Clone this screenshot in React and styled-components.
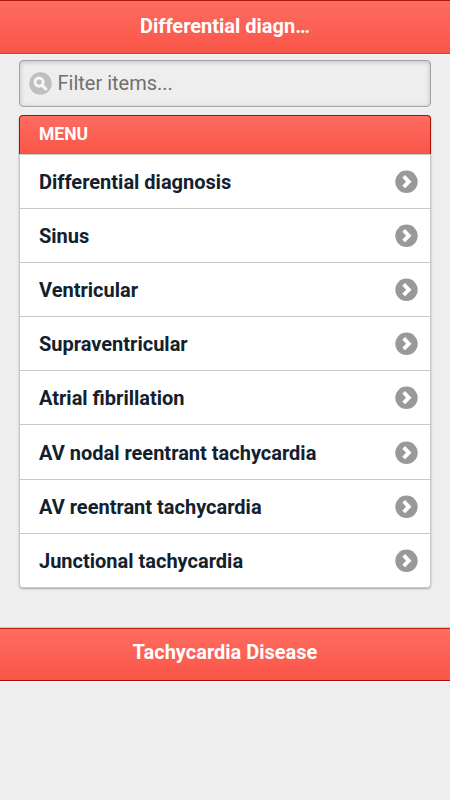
import React from "react";
import styled, { createGlobalStyle } from "styled-components";

const GlobalStyle = createGlobalStyle`
  * { box-sizing: border-box; }
  body { margin: 0; background: #eeeeee; font-family: Roboto, "Liberation Sans", sans-serif; }
  h1, h2, h3, ul { margin: 0; padding: 0; }
`;

const Page = styled.div`
  min-height: 800px;
  background: #eeeeee;
`;

const Bar = styled.header`
  height: ${(p) => p.$height}px;
  border-top: 1px solid ${(p) => p.$top};
  border-bottom: 1px solid ${(p) => p.$bottom};
  background: linear-gradient(#ff6c60, #f95548);
  box-shadow: 0 1px 1px rgba(255, 255, 255, 0.7), 0 -1px 0 rgba(120, 120, 120, 0.3);
  text-align: center;
`;

const BarTitle = styled.h1`
  color: #fff;
  font-size: 20px;
  line-height: 24px;
  padding-top: ${(p) => p.$pad}px;
  font-weight: 700;
`;

const Content = styled.main`
  padding: 6.5px 19px 39.6px;
`;

const SearchBox = styled.label`
  display: flex;
  align-items: center;
  gap: 6px;
  height: 47px;
  padding: 0 9px 0 8.5px;
  border: 1px solid #a3a3a3;
  border-radius: 4px;
  background: #eeeeee;
  box-shadow: inset 0 1px 5px rgba(0, 0, 0, 0.2), 0 1px 0 rgba(255, 255, 255, 0.4);
`;

const SearchInput = styled.input`
  flex: 1;
  min-width: 0;
  border: 0;
  padding: 0 0 1px;
  outline: 0;
  background: transparent;
  font: 400 20px/24px Roboto, sans-serif;
  color: #666;
  &::placeholder { color: #707070; opacity: 1; }
`;

const List = styled.ul`
  list-style: none;
  margin-top: 8px;
  border-radius: 4px;
  box-shadow: 0 1px 2px rgba(0, 0, 0, 0.3);
`;

const Divider = styled.li`
  height: 38.5px;
  padding: 7px 19px 0;
  border: 1px solid #a4120b;
  border-bottom: 0;
  border-radius: 4px 4px 0 0;
  background: linear-gradient(#ff6c60, #f95548);
  color: #fff;
  font-size: 17.5px;
  line-height: 22px;
  font-weight: 700;
`;

const Row = styled.li`
  display: flex;
  align-items: center;
  justify-content: space-between;
  height: 54.2px;
  padding: 0 12.5px 0 19px;
  border: 1px solid #c8c8c8;
  border-bottom-width: 0;
  background: #fff;
  color: #12212d;
  font-size: 20px;
  line-height: 24px;
  font-weight: 700;
  &:last-child { border-bottom-width: 1px; border-radius: 0 0 4px 4px; height: 55.5px; }
`;

const Label = styled.span`
  padding-top: 1px;
`;

const Icon = styled.svg`
  display: block;
  flex: none;
  width: 23px;
  height: 23px;
`;

const items = [
  "Differential diagnosis",
  "Sinus",
  "Ventricular",
  "Supraventricular",
  "Atrial fibrillation",
  "AV nodal reentrant tachycardia",
  "AV reentrant tachycardia",
  "Junctional tachycardia",
];

const SearchIcon = () => (
  <Icon viewBox="0 0 23 23">
    <circle cx="11.5" cy="11.5" r="11.25" fill="#bfbfbf" />
    <circle cx="10.1" cy="10.1" r="4.1" fill="none" stroke="#f6f6f6" strokeWidth="2.9" />
    <path d="M13.3 13.3L16.8 16.8" stroke="#f6f6f6" strokeWidth="3.3" strokeLinecap="round" />
  </Icon>
);

const ArrowIcon = () => (
  <Icon viewBox="0 0 23 23">
    <circle cx="11.5" cy="11.8" r="11.2" fill="#999" />
    <path d="M8.7 6.4L13.8 11.7L8.7 17" fill="none" stroke="#fff" strokeWidth="3.9" />
  </Icon>
);

export default function App() {
  return (
    <Page>
      <GlobalStyle />
      <Bar $height={53.5} $top="#aa1710" $bottom="#c84438">
        <BarTitle $pad={13}>Differential diagn…</BarTitle>
      </Bar>
      <Content>
        <SearchBox>
          <SearchIcon />
          <SearchInput placeholder="Filter items..." />
        </SearchBox>
        <List>
          <Divider>MENU</Divider>
          {items.map((item) => (
            <Row key={item}>
              <Label>{item}</Label>
              <ArrowIcon />
            </Row>
          ))}
        </List>
      </Content>
      <Bar as="footer" $height={53} $top="#c51e12" $bottom="#ad0f0a">
        <BarTitle as="h2" $pad={11}>Tachycardia Disease</BarTitle>
      </Bar>
    </Page>
  );
}
